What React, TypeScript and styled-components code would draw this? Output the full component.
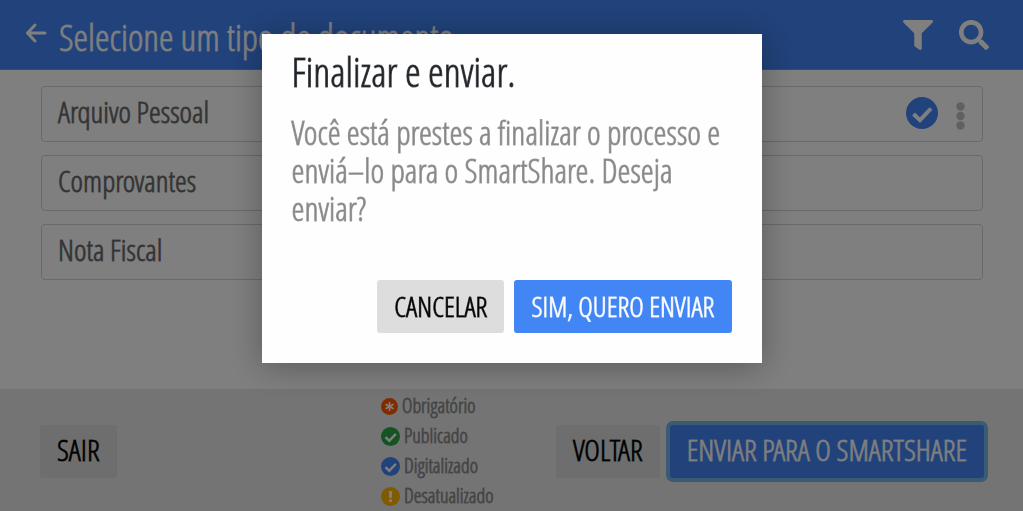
import React from "react";
import styled, { createGlobalStyle, css } from "styled-components";
import { FaFilter, FaSearch } from "react-icons/fa";

const GlobalStyle = createGlobalStyle`
  *, *::before, *::after { box-sizing: border-box; }
  body {
    margin: 0;
    background: #fff;
    color: #212529;
    font-family: "Open Sans Condensed Light", "Open Sans Condensed", "Roboto Condensed", sans-serif;
  }
  /* the light cut is thickened to a regular weight */
  h1, h2, p, li, button {
    -webkit-text-stroke: 1px color-mix(in srgb, currentColor 75%, transparent);
  }
  h1, h2, p, ul { margin: 0; padding: 0; font-weight: 400; }
`;

const Page = styled.div`
  display: flex;
  flex-direction: column;
  min-height: 100vh;
`;

const Header = styled.header`
  display: flex;
  align-items: center;
  height: 70px;
  padding: 0 34px 0 24px;
  background: #4285f4;
  border-bottom: 1px solid #6c94dc;
  color: #fff;
`;

const PageTitle = styled.h1`
  flex: 1;
  padding-top: 4px;
  font-size: 37px;
  line-height: 40px;
  white-space: nowrap;
`;

const IconButton = styled.button`
  display: flex;
  padding: 0;
  border: 0;
  background: none;
  color: inherit;
`;

const BackButton = styled(IconButton)`
  margin: 0 11px 4px 0;
`;

const HeaderActions = styled.div`
  display: flex;
  gap: 26px;
`;

const DocumentList = styled.ul`
  flex: 1;
  display: flex;
  flex-direction: column;
  gap: 13px;
  padding: 16px 40px 0 41px;
  list-style: none;
`;

const DocumentRow = styled.li`
  display: flex;
  align-items: center;
  gap: 14px;
  height: 56px;
  padding: 0 12px 2px 16px;
  border: 1px solid #d2d3d5;
  border-radius: 4px;
  color: #666;
  font-size: 30px;
  line-height: 32px;
`;

const DocumentName = styled.span`
  flex: 1;
  padding-bottom: 2px;
`;

const MoreButton = styled(IconButton)`
  padding: 6px 5px 0 4px;
  color: #c0c0c0;
`;

const Footer = styled.footer`
  display: grid;
  grid-template-columns: 1fr 2fr;
  align-items: center;
  height: 122px;
  padding-top: 2px;
  background: #e9e9eb;
`;

const FooterStart = styled.div`
  padding-left: 40px;
`;

const FooterEnd = styled.div`
  display: flex;
  align-items: center;
  justify-content: space-between;
  padding: 0 39px 0 40px;
`;

const ButtonGroup = styled.div`
  display: flex;
  justify-content: flex-end;
  gap: 10px;
`;

const Button = styled.button<{ $primary?: boolean; $focused?: boolean; $compact?: boolean }>`
  height: 53px;
  padding: 0 17px 2px;
  border: 0;
  border-radius: 3px;
  background: ${(p) => (p.$primary ? "#4285f4" : "#ddd")};
  color: ${(p) => (p.$primary ? "#fff" : "#000")};
  font-family: inherit;
  font-size: ${(p) => (p.$compact ? "28px" : "30px")};
  line-height: 32px;
  white-space: nowrap;
  ${(p) => p.$focused && css`box-shadow: 0 0 0 4px #76b4e8;`}
`;

const Legend = styled.ul`
  display: flex;
  flex-direction: column;
  gap: 6px;
  list-style: none;
`;

const LegendItem = styled.li`
  display: flex;
  align-items: center;
  gap: 4px;
  color: #888;
  font-size: 20px;
  line-height: 24px;
`;

const Backdrop = styled.div`
  position: fixed;
  inset: 0;
  display: flex;
  justify-content: center;
  align-items: flex-start;
  padding-top: 34px;
  background: rgba(0, 0, 0, 0.5);
`;

const Dialog = styled.section`
  width: 100%;
  max-width: 500px;
  padding: 18px 30px 30px;
  background: #fefefe;
  box-shadow: 0 4px 32px rgba(0, 0, 0, 0.3);
`;

const DialogTitle = styled.h2`
  margin-bottom: 22px;
  font-size: 40px;
  line-height: 40px;
`;

const DialogText = styled.p`
  margin-bottom: 52px;
  color: #888;
  font-size: 33px;
  line-height: 38px;
`;

function BackArrow() {
  return (
    <svg width="24" height="24" viewBox="0 0 24 24" fill="none" stroke="currentColor" strokeWidth="3" strokeLinecap="round" strokeLinejoin="round" aria-hidden="true">
      <path d="M21 12H4M11 4L3.500 12L11 20" />
    </svg>
  );
}

function CheckBadge({ size, color }: { size: number; color: string }) {
  return (
    <svg width={size} height={size} viewBox="0 0 32 32" aria-hidden="true">
      <circle cx="16" cy="16" r="16" fill={color} />
      <path d="M7.500 17L14 23.200L25 11.500" fill="none" stroke="#fff" strokeWidth="4" />
    </svg>
  );
}

function RequiredBadge() {
  return (
    <svg width="17" height="17" viewBox="0 0 17 17" aria-hidden="true">
      <circle cx="8.500" cy="8.500" r="8.500" fill="#ff5a00" />
      <path d="M8.500 4V13M4.500 6.200L12.500 10.800M4.500 10.800L12.500 6.200" stroke="#fff" strokeWidth="1.600" />
    </svg>
  );
}

function OutdatedBadge() {
  return (
    <svg width="19" height="19" viewBox="0 0 19 19" aria-hidden="true">
      <circle cx="9.500" cy="9.500" r="9.500" fill="#ffb400" />
      <path d="M7.800 4H11.200L10.800 11H8.200ZM8 12.300H11V15H8Z" fill="#fff" />
    </svg>
  );
}

function MoreDots() {
  return (
    <svg width="9" height="28" viewBox="0 0 9 28" fill="currentColor" aria-hidden="true">
      <circle cx="4.500" cy="4.500" r="4.200" />
      <circle cx="4.500" cy="14" r="4.200" />
      <circle cx="4.500" cy="23.500" r="4.200" />
    </svg>
  );
}

const documents = [
  { name: "Arquivo Pessoal", scanned: true },
  { name: "Comprovantes", scanned: false },
  { name: "Nota Fiscal", scanned: false },
];

const legend = [
  { label: "Obrigatório", icon: <RequiredBadge /> },
  { label: "Publicado", icon: <CheckBadge size={19} color="#28a745" /> },
  { label: "Digitalizado", icon: <CheckBadge size={19} color="#4285f4" /> },
  { label: "Desatualizado", icon: <OutdatedBadge /> },
];

export default function App() {
  return (
    <>
      <GlobalStyle />
      <Page>
        <Header>
          <BackButton aria-label="Voltar"><BackArrow /></BackButton>
          <PageTitle>Selecione um tipo de documento</PageTitle>
          <HeaderActions>
            <IconButton aria-label="Filtrar"><FaFilter size={30} /></IconButton>
            <IconButton aria-label="Pesquisar"><FaSearch size={30} /></IconButton>
          </HeaderActions>
        </Header>
        <DocumentList>
          {documents.map((doc) => (
            <DocumentRow key={doc.name}>
              <DocumentName>{doc.name}</DocumentName>
              {doc.scanned && (
                <>
                  <CheckBadge size={32} color="#4285f4" />
                  <MoreButton aria-label="Mais opções"><MoreDots /></MoreButton>
                </>
              )}
            </DocumentRow>
          ))}
        </DocumentList>
        <Footer>
          <FooterStart>
            <Button>SAIR</Button>
          </FooterStart>
          <FooterEnd>
            <Legend>
              {legend.map((item) => (
                <LegendItem key={item.label}>{item.icon}{item.label}</LegendItem>
              ))}
            </Legend>
            <ButtonGroup>
              <Button>VOLTAR</Button>
              <Button $primary $focused>ENVIAR PARA O SMARTSHARE</Button>
            </ButtonGroup>
          </FooterEnd>
        </Footer>
      </Page>
      <Backdrop>
        <Dialog role="dialog" aria-modal="true" aria-labelledby="dialog-title">
          <DialogTitle id="dialog-title">Finalizar e enviar.</DialogTitle>
          <DialogText>
            Você está prestes a finalizar o processo e enviá–lo para o SmartShare. Deseja enviar?
          </DialogText>
          <ButtonGroup>
            <Button $compact>CANCELAR</Button>
            <Button $compact $primary>SIM, QUERO ENVIAR</Button>
          </ButtonGroup>
        </Dialog>
      </Backdrop>
    </>
  );
}
